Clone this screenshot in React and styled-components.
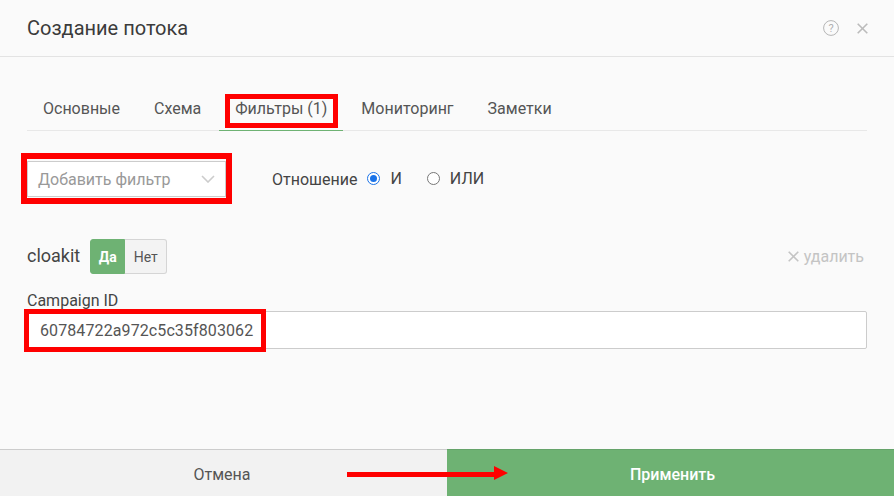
import React from 'react'
import styled, { createGlobalStyle } from 'styled-components'

const Global = createGlobalStyle`
  html, body { margin: 0; padding: 0; background: #fafafa; }
  * { box-sizing: border-box; }
`

const Page = styled.div`
  position: relative;
  width: 894px;
  height: 496px;
  overflow: hidden;
  display: flex;
  flex-direction: column;
  background: #fafafa;
  color: #444;
  font-family: Roboto, "Liberation Sans", sans-serif;
`

const Header = styled.header`
  height: 57px;
  flex: none;
  padding: 0 27px;
  display: flex;
  align-items: center;
  justify-content: space-between;
  border-bottom: 1px solid #e3e3e3;
`

const Title = styled.h1`
  margin: 0;
  font-size: 20px;
  font-weight: 400;
  color: #3b3b3b;
`

const HeaderIcons = styled.div`
  display: flex;
  align-items: center;
  gap: 18px;
  margin-right: -1px;
`

const Body = styled.main`
  flex: 1;
  padding: 28px 27px 0;
`

const Tabs = styled.nav`
  display: flex;
  gap: 2px;
  height: 46px;
  border-bottom: 1px solid #e8e8e8;
`

const Tab = styled.div`
  height: 46px;
  padding: 1px 16px 0;
  display: flex;
  align-items: center;
  font-size: 16px;
  color: #555;
  border-bottom: 1px solid ${p => (p.$active ? '#6eb273' : 'transparent')};
`

const FilterBar = styled.div`
  display: flex;
  align-items: center;
  margin-top: 30px;
  height: 36px;
`

const Select = styled.div`
  width: 199px;
  height: 36px;
  padding: 0 10px;
  display: flex;
  align-items: center;
  justify-content: space-between;
  background: #fff;
  border: 1px solid #ccc;
  font-size: 16px;
  color: #999;
`

const Relation = styled.div`
  margin-left: 46px;
  display: flex;
  align-items: center;
  font-size: 16px;
  color: #444;
`

const RadioLabel = styled.label`
  display: flex;
  align-items: center;
  gap: 10px;
  margin-left: ${p => p.$gap}px;
  padding-bottom: 2px;
  font-size: 16px;
`

const Radio = styled.span`
  width: 13px;
  height: 13px;
  border-radius: 50%;
  background: #fff;
  border: 1px solid ${p => (p.$checked ? '#1a73e8' : '#777')};
  display: flex;
  align-items: center;
  justify-content: center;
  &::after {
    content: '';
    width: 7px;
    height: 7px;
    border-radius: 50%;
    background: ${p => (p.$checked ? '#1a73e8' : 'transparent')};
  }
`

const FilterHead = styled.div`
  margin-top: 42px;
  height: 35px;
  display: flex;
  align-items: center;
`

const FilterName = styled.span`
  font-size: 18px;
  color: #444;
  margin-right: 10px;
  padding-bottom: 2px;
`

const Toggle = styled.div`
  display: flex;
  height: 35px;
`

const ToggleBtn = styled.div`
  height: 35px;
  width: ${p => (p.$on ? 35 : 42)}px;
  display: flex;
  align-items: center;
  justify-content: center;
  font-size: 14px;
  font-weight: ${p => (p.$on ? 700 : 400)};
  color: ${p => (p.$on ? '#fff' : '#555')};
  background: ${p => (p.$on ? '#6eb273' : '#f3f3f3')};
  border: 1px solid ${p => (p.$on ? '#6eb273' : '#d5d5d5')};
  border-left-width: ${p => (p.$on ? 1 : 0)}px;
  border-radius: ${p => (p.$on ? '3px 0 0 3px' : '0 3px 3px 0')};
`

const Remove = styled.div`
  margin-left: auto;
  margin-right: 3px;
  display: flex;
  align-items: center;
  gap: 5px;
  font-size: 16px;
  color: #c4c4c4;
`

const FieldLabel = styled.div`
  margin-top: 17px;
  height: 20px;
  line-height: 20px;
  font-size: 16px;
  color: #444;
`

const Input = styled.div`
  height: 38px;
  padding: 0 12px;
  display: flex;
  align-items: center;
  background: #fff;
  border: 1px solid #ccc;
  border-radius: 2px;
  font-size: 16px;
  letter-spacing: 0.1px;
  color: #555;
`

const Footer = styled.footer`
  flex: none;
  height: 47px;
  display: flex;
`

const CancelBtn = styled.div`
  width: 447px;
  padding: 3px 3px 0 0;
  display: flex;
  align-items: center;
  justify-content: center;
  background: #f2f2f2;
  border-top: 1px solid #ccc;
  font-size: 16px;
  color: #555;
`

const ApplyBtn = styled.div`
  flex: 1;
  padding: 3px 0 0 4px;
  display: flex;
  align-items: center;
  justify-content: center;
  background: #6eb273;
  border-top: 1px solid #65a36a;
  font-size: 16px;
  font-weight: 500;
  color: #fff;
`

// red annotations drawn on top of the screenshot
const Mark = styled.div`
  position: absolute;
  left: ${p => p.$x}px;
  top: ${p => p.$y}px;
  width: ${p => p.$w}px;
  height: ${p => p.$h}px;
  border: ${p => p.$b}px solid #f00;
  pointer-events: none;
`

const Arrow = styled.svg`
  position: absolute;
  left: 347px;
  top: 464px;
`

const HelpIcon = () => (
  <svg width="16" height="16" viewBox="0 0 16 16" fill="none">
    <circle cx="8" cy="8" r="7.4" stroke="#b5b5b5" />
    <text x="8" y="11.8" textAnchor="middle" fontSize="11" fontFamily="Roboto" fill="#b0b0b0">?</text>
  </svg>
)

const CloseIcon = ({ size = 11, color = '#bbb', width = 1.6 }) => (
  <svg width={size} height={size} viewBox="0 0 11 11" fill="none">
    <path d="M.7.7l9.6 9.6M10.3.7L.7 10.3" stroke={color} strokeWidth={width} />
  </svg>
)

const Chevron = () => (
  <svg width="14" height="8" viewBox="0 0 14 8" fill="none">
    <path d="M1 1l6 6 6-6" stroke="#ccc" strokeWidth="1.6" />
  </svg>
)

const App = () => (
  <Page>
    <Global />
    <Header>
      <Title>Создание потока</Title>
      <HeaderIcons>
        <HelpIcon />
        <CloseIcon />
      </HeaderIcons>
    </Header>
    <Body>
      <Tabs>
        <Tab>Основные</Tab>
        <Tab>Схема</Tab>
        <Tab $active>Фильтры (1)</Tab>
        <Tab>Мониторинг</Tab>
        <Tab>Заметки</Tab>
      </Tabs>
      <FilterBar>
        <Select>
          Добавить фильтр
          <Chevron />
        </Select>
        <Relation>
          Отношение
          <RadioLabel $gap={10}><Radio $checked />И</RadioLabel>
          <RadioLabel $gap={25}><Radio />ИЛИ</RadioLabel>
        </Relation>
      </FilterBar>
      <FilterHead>
        <FilterName>cloakit</FilterName>
        <Toggle>
          <ToggleBtn $on>Да</ToggleBtn>
          <ToggleBtn>Нет</ToggleBtn>
        </Toggle>
        <Remove>
          <CloseIcon size={11} color="#c4c4c4" />
          удалить
        </Remove>
      </FilterHead>
      <FieldLabel>Campaign ID</FieldLabel>
      <Input>60784722a972c5c35f803062</Input>
    </Body>
    <Footer>
      <CancelBtn>Отмена</CancelBtn>
      <ApplyBtn>Применить</ApplyBtn>
    </Footer>
    <Mark $x={225} $y={94} $w={113} $h={34} $b={5} />
    <Mark $x={21} $y={153} $w={211} $h={51} $b={6} />
    <Mark $x={24} $y={309} $w={242} $h={43} $b={5} />
    <Arrow width="162" height="18" viewBox="0 0 162 18">
      <path d="M0 8h147V2l14 7-14 7v-3H0z" fill="#f00" />
    </Arrow>
  </Page>
)

export default App
